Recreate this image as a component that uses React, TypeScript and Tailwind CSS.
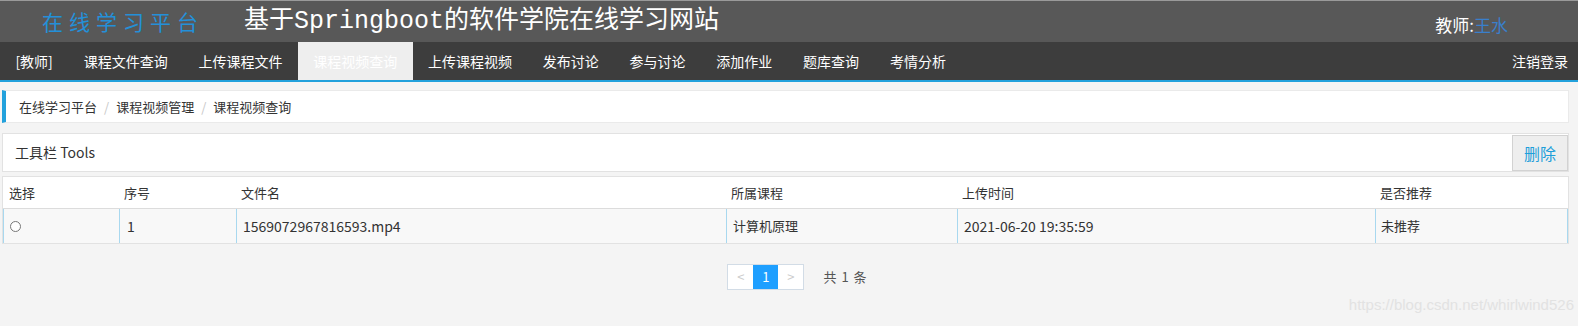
const navItems = [
  '[教师]',
  '课程文件查询',
  '上传课程文件',
  '课程视频查询',
  '上传课程视频',
  '发布讨论',
  '参与讨论',
  '添加作业',
  '题库查询',
  '考情分析',
]

const columns = ['选择', '序号', '文件名', '所属课程', '上传时间', '是否推荐']

const rows = [
  { no: '1', file: '1569072967816593.mp4', course: '计算机原理', time: '2021-06-20 19:35:59', rec: '未推荐' },
]

const cjk = { fontFamily: '"Noto Sans CJK SC", "Noto Sans", sans-serif' }

export default function App() {
  const active = '课程视频查询'

  return (
    <div className="min-h-screen bg-[#f4f4f4] text-[#333]" style={cjk}>
      {/* top header */}
      <header className="h-[42px] bg-[#585858] border-t border-[#9a9a9a] flex items-center">
        <span className="ml-[42px] text-[21px] tracking-[6px] text-[#2490d8] leading-none">在线学习平台</span>
        <span
          className="ml-[40px] text-[25px] text-white leading-none"
          style={{ fontFamily: '"Liberation Mono", "Noto Sans CJK SC", monospace' }}
        >
          基于Springboot的软件学院在线学习网站
        </span>
        <span className="ml-auto mr-[70px] mt-[5px] text-[17px] text-white leading-none">
          教师:<span className="text-[#3a7fcb]">王水</span>
        </span>
      </header>

      {/* nav bar */}
      <nav className="h-[40px] bg-[#3d3d3d] border-b-2 border-[#22a1dc] flex text-[14px] text-white">
        {navItems.map(item => (
          <a
            key={item}
            className={
              item === active
                ? 'px-[15.4px] flex items-center bg-[#eeeeee] text-white'
                : 'px-[15.4px] flex items-center'
            }
          >
            {item}
          </a>
        ))}
        <a className="ml-auto px-[10px] flex items-center">注销登录</a>
      </nav>

      <div className="ml-[2px] w-[1567px]">
        {/* breadcrumb */}
        <div className="mt-[8px] h-[33px] bg-white border border-[#eaeaea] border-l-4 border-l-[#22a1dc] flex items-center pl-[13px] text-[13px]">
          <span>在线学习平台</span>
          <span className="px-[7px] text-[#c8c8c8]">/</span>
          <span>课程视频管理</span>
          <span className="px-[7px] text-[#c8c8c8]">/</span>
          <span>课程视频查询</span>
        </div>

        {/* tools */}
        <div className="mt-[10px] h-[39px] bg-white border border-[#e2e2e2] flex items-center">
          <span className="pl-[12px] text-[14px]">工具栏 Tools</span>
          <button className="ml-auto h-[36px] w-[56px] bg-[#eeeeee] border border-[#d2d2d2] text-[16px] text-[#1e9fda]">
            删除
          </button>
        </div>

        {/* table */}
        <div className="mt-[4px] bg-white border border-[#e2e2e2] text-[13px]">
          <div className="grid grid-cols-[115px_117px_490px_231px_418px_1fr] h-[32px] items-center border-b border-[#dcdcdc]">
            {columns.map(c => (
              <div key={c} className="px-[6px]">{c}</div>
            ))}
          </div>
          {rows.map(r => (
            <div
              key={r.no}
              className="grid grid-cols-[115px_117px_490px_231px_418px_1fr] h-[34px] bg-[#f8f8f8] border-l border-r border-[#a8d8ef]"
            >
              <div className="px-[6px] flex items-center">
                <span className="w-[11px] h-[11px] rounded-full border border-[#777] bg-white" />
              </div>
              <div className="px-[7px] flex items-center border-l border-[#a8d8ef] text-[14px]">{r.no}</div>
              <div className="px-[6px] flex items-center border-l border-[#a8d8ef] text-[14px]">{r.file}</div>
              <div className="px-[6px] flex items-center border-l border-[#a8d8ef]">{r.course}</div>
              <div className="px-[6px] flex items-center border-l border-[#a8d8ef] text-[14px]">{r.time}</div>
              <div className="px-[5px] flex items-center border-l border-[#a8d8ef]">{r.rec}</div>
            </div>
          ))}
        </div>

        {/* pagination */}
        <div className="mt-[20px] flex items-center justify-center">
          <div className="ml-[24px] flex h-[26px] border border-[#d2dce6] text-[13px]">
            <span className="w-[25px] flex items-center justify-center bg-white text-[#cccccc]">&lt;</span>
            <span className="w-[25px] flex items-center justify-center bg-[#1e9fff] text-white">1</span>
            <span className="w-[25px] flex items-center justify-center bg-white text-[#cccccc]">&gt;</span>
          </div>
          <span className="ml-[19px] text-[13px] text-[#555] tracking-[1px]">共 1 条</span>
        </div>
      </div>

      <div className="mt-[4px] pr-[4px] text-right text-[15px] text-[#e2e2e2]" style={{ fontFamily: '"Liberation Sans", sans-serif' }}>
        https://blog.csdn.net/whirlwind526
      </div>
    </div>
  )
}
